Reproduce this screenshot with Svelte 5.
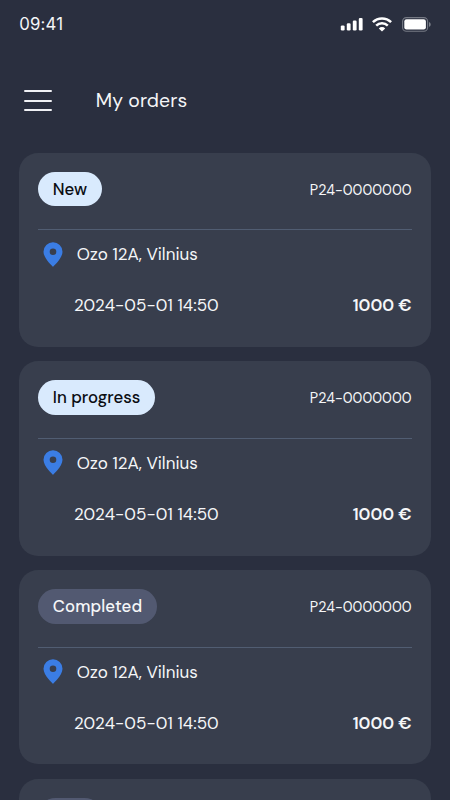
<script lang="ts">
  type Order = {
    id: number;
    status: string;
    active: boolean;
    number: string;
    address: string;
    date: string;
    price: string;
  };

  const details = {
    number: "P24-0000000",
    address: "Ozo 12A, Vilnius",
    date: "2024-05-01 14:50",
    price: "1000 €",
  };

  let orders = $state<Order[]>([
    { id: 1, status: "New", active: true, ...details },
    { id: 2, status: "In progress", active: true, ...details },
    { id: 3, status: "Completed", active: false, ...details },
  ]);
</script>

<div class="screen">
  <div class="status-bar">
    <span class="time">09:41</span>
    <div class="indicators">
      <svg width="24" height="14" viewBox="0 0 24 14" fill="#fff">
        <rect x="0.8" y="8.4" width="3.8" height="5" rx="1.2" />
        <rect x="6.8" y="6.3" width="3.8" height="7.1" rx="1.2" />
        <rect x="12.8" y="3.6" width="3.8" height="9.8" rx="1.2" />
        <rect x="18.8" y="0.9" width="3.8" height="12.5" rx="1.2" />
      </svg>
      <svg class="wifi" width="20" height="15" viewBox="0 0 20 15" fill="none" stroke="#fff" stroke-width="2.5">
        <path d="M.9 5.2a13 13 0 0 1 18.2 0" />
        <path d="M4.2 8.6a8.2 8.2 0 0 1 11.6 0" />
        <path d="M10 14.6 6.8 11.4a4.5 4.5 0 0 1 6.4 0z" fill="#fff" stroke="none" />
      </svg>
      <svg class="battery" width="30" height="15" viewBox="0 0 30 15">
        <rect x="0.6" y="0.6" width="25" height="13.6" rx="3.8" fill="none" stroke="#757984" stroke-width="1.1" />
        <rect x="2.3" y="2.3" width="21.6" height="10.2" rx="2.2" fill="#fff" />
        <path d="M27 5v4.8c1.1-.5 1.7-1.4 1.7-2.4S28.1 5.5 27 5z" fill="#7c808b" />
      </svg>
    </div>
  </div>

  <header>
    <button class="menu" aria-label="Menu">
      <span></span>
      <span></span>
      <span></span>
    </button>
    <h1>My orders</h1>
  </header>

  <main>
    {#each orders as order (order.id)}
      <article class="card">
        <div class="top">
          <span class="badge" class:active={order.active}>{order.status}</span>
          <span class="number">{order.number}</span>
        </div>
        <div class="place">
          <svg width="20" height="25" viewBox="0 0 20 25">
            <path
              fill="#3b7de4"
              fill-rule="evenodd"
              d="M10 .3A9.5 9.5 0 0 0 .5 9.7C.5 16.5 10 24.7 10 24.7S19.5 16.5 19.5 9.7A9.5 9.5 0 0 0 10 .3zm0 6.2a3.3 3.3 0 1 1 0 6.6 3.3 3.3 0 0 1 0-6.6z"
            />
          </svg>
          <span class="address">{order.address}</span>
        </div>
        <div class="bottom">
          <span class="date">{order.date}</span>
          <span class="price">{order.price}</span>
        </div>
      </article>
    {/each}
    <article class="card">
      <div class="top"><span class="badge empty"></span></div>
    </article>
  </main>
</div>

<style>
  :global(body) { background: #2a2f3f; }
  .screen {
    height: 800px;
    overflow: hidden;
    box-sizing: border-box;
    background: #2a2f3f;
    color: #f5f6f8;
    font-family: "DM Sans", Inter, "Liberation Sans", sans-serif;
  }
  .status-bar {
    display: flex;
    align-items: center;
    justify-content: space-between;
    height: 48px;
    padding: 0 18px 0 19.2px;
  }
  .time { font-family: Inter, sans-serif; font-size: 16.8px; letter-spacing: 0.15px; }
  .indicators { display: flex; align-items: center; }
  .wifi { margin-left: 8px; }
  .battery { margin-left: 10px; }

  header { display: flex; align-items: center; height: 104.5px; padding-left: 24.4px; }
  .menu {
    display: flex;
    flex-direction: column;
    gap: 7.6px;
    padding: 1px 0 0;
    border: 0;
    background: none;
  }
  .menu span { width: 27.8px; height: 2px; border-radius: 1px; background: #f0f1f5; }
  h1 {
    margin: 0 0 0 43.6px;
    padding-top: 1px;
    font-size: 19.4px;
    font-weight: 450;
    line-height: 24px;
    letter-spacing: 0.1px;
  }

  main { display: flex; flex-direction: column; gap: 14.4px; padding: 0 19.2px; }
  .card {
    flex: none;
    box-sizing: border-box;
    height: 194.4px;
    padding: 19.2px;
    border-radius: 19.2px;
    background: #383e4d;
  }
  .top {
    display: flex;
    justify-content: space-between;
    height: 57.4px;
    border-bottom: 1px solid #515d72;
  }
  .badge {
    box-sizing: border-box;
    height: 34.8px;
    padding: 0 14.4px;
    border-radius: 18px;
    background: #525971;
    font-size: 16.8px;
    font-weight: 500;
    line-height: 35.6px;
    letter-spacing: 0.1px;
  }
  .badge.active { background: #d9eafd; color: #0b0d12; letter-spacing: 0.03px; }
  .badge.empty { width: 63.6px; }
  .number { font-size: 14.4px; font-weight: 400; line-height: 36.4px; }
  .place { display: flex; align-items: center; height: 48.2px; padding-left: 4.2px; }
  .address { margin-left: 14.3px; font-size: 17px; font-weight: 450; }
  .bottom {
    display: flex;
    align-items: center;
    justify-content: space-between;
    height: 54px;
    padding-left: 35.5px;
    font-size: 17px;
  }
  .date { font-weight: 450; letter-spacing: 0.07px; }
  .price { font-weight: 600; }
</style>
